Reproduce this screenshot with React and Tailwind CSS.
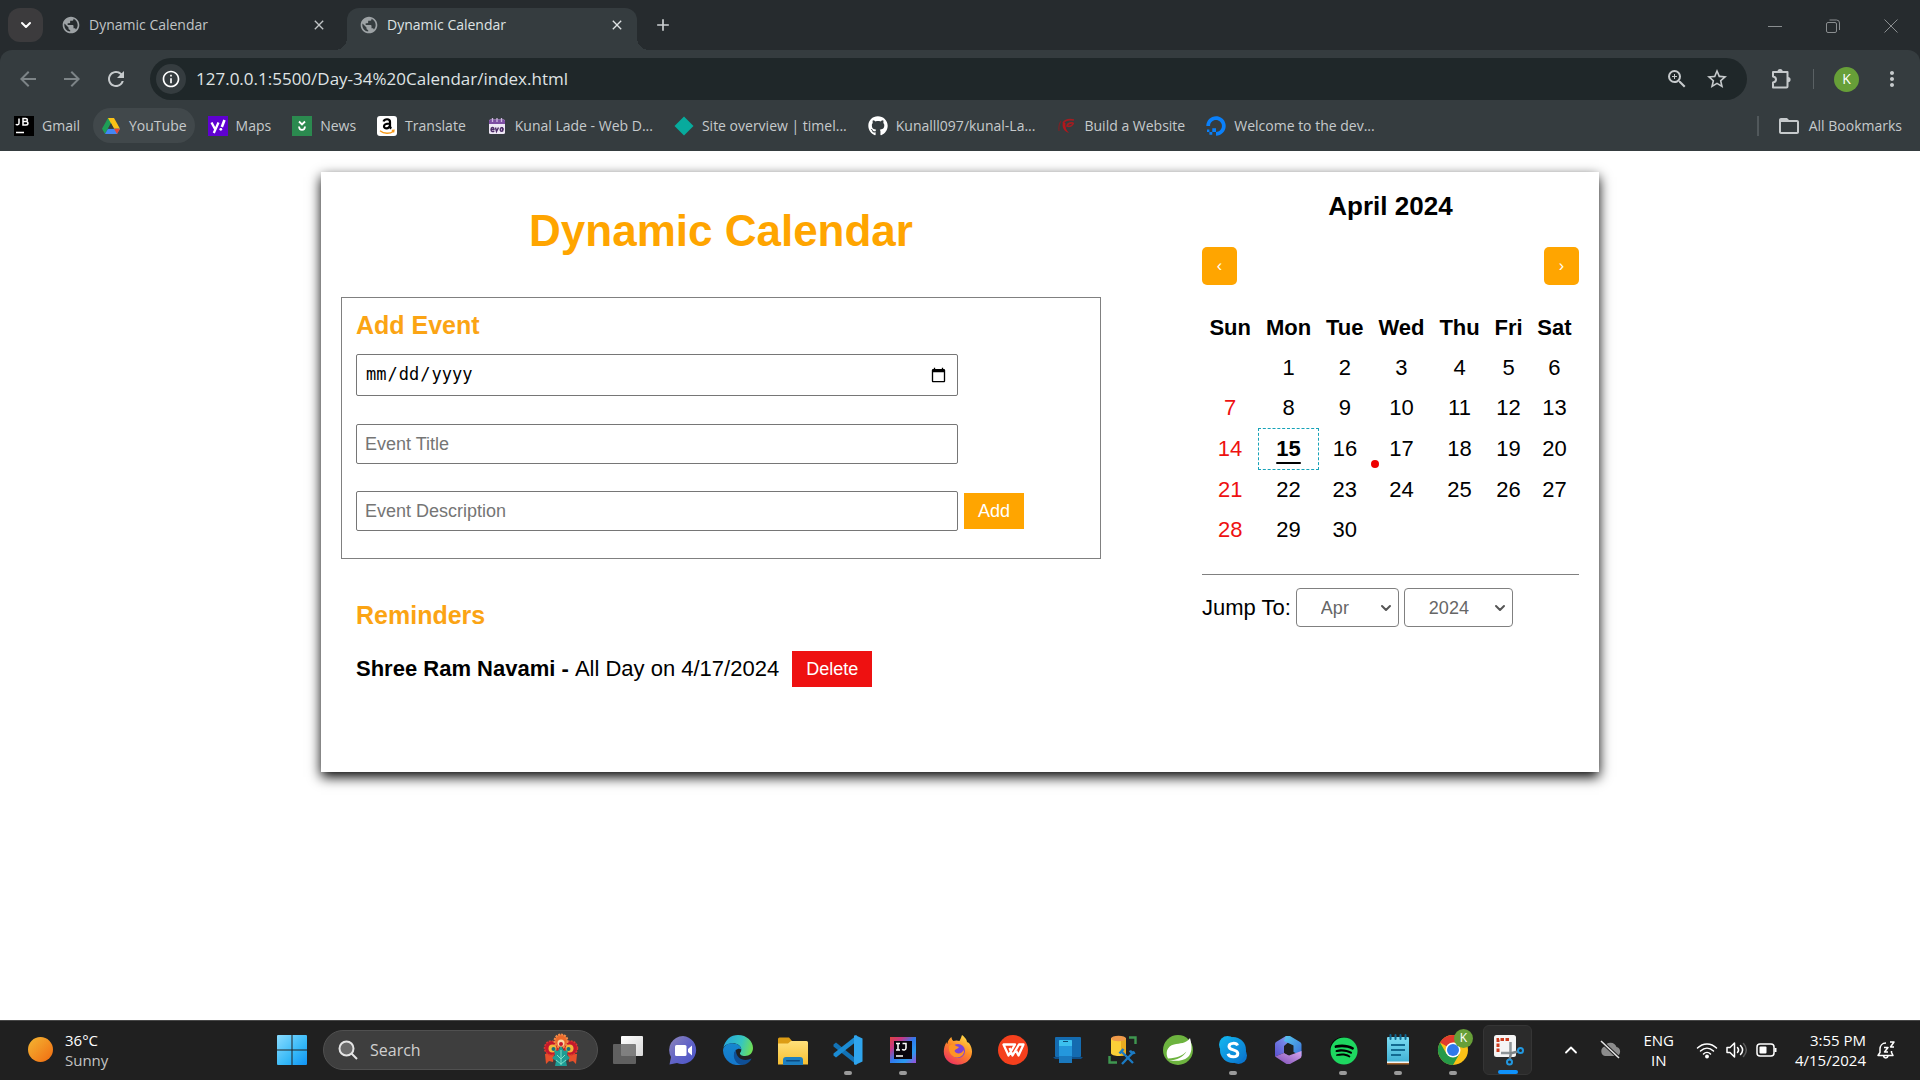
import React from "react";
import {
  MdArrowBack,
  MdArrowForward,
  MdRefresh,
  MdInfoOutline,
  MdZoomIn,
  MdStarBorder,
  MdMoreVert,
  MdFolderOpen,
  MdPublic,
  MdClose,
  MdAdd,
} from "react-icons/md";
import { FaGithub, FaDigitalOcean, FaSpotify } from "react-icons/fa";
import { ChevronUp, ChevronDown } from "lucide-react";

/* ---------- Browser chrome ---------- */

function Tab({ active, title }) {
  return (
    <div
      className={
        active
          ? "relative flex h-[42px] w-[290px] items-center rounded-t-xl bg-[#353c3f] px-3 pb-2 text-[#dfe3e4]"
          : "flex h-[42px] w-[298px] items-center pb-2 pr-5 pl-3 text-[#c0c4c6]"
      }
    >
      {active && (
        <>
          <span className="absolute bottom-0 -left-3 size-3 bg-[radial-gradient(circle_at_0_0,transparent_12px,#353c3f_12px)]" />
          <span className="absolute bottom-0 -right-3 size-3 bg-[radial-gradient(circle_at_100%_0,transparent_12px,#353c3f_12px)]" />
        </>
      )}
      <MdPublic className="size-5 text-[#9da2a5]" />
      <span className="ml-2 flex-1 text-sm leading-5">{title}</span>
      <button aria-label={"Close " + title} className="p-0">
        <MdClose className="size-4" />
      </button>
    </div>
  );
}

function TabStrip() {
  return (
    <div className="flex h-[50px] items-end bg-[#262b2e]">
      <button aria-label="Search tabs" className="mb-2 ml-2 grid h-[34px] w-[35px] place-items-center rounded-xl bg-[#3c3b3d] text-white">
        <ChevronDown className="size-4" strokeWidth={3} />
      </button>
      <div className="ml-[6px] flex">
        <Tab title="Dynamic Calendar" />
        <Tab title="Dynamic Calendar" active />
      </div>
      <button aria-label="New tab" className="mb-[15px] ml-4 text-[#cdd1d3]">
        <MdAdd className="size-5" />
      </button>
      <div className="mb-[17px] ml-auto flex items-center gap-11 pr-[22px] text-[#8a8e90]">
        <button aria-label="Minimize">
          <svg className="size-[14px]" viewBox="0 0 14 14" stroke="currentColor" fill="none"><path d="M0 7.5h14" /></svg>
        </button>
        <button aria-label="Restore">
          <svg className="size-[14px]" viewBox="0 0 14 14" stroke="currentColor" fill="none">
            <rect x="0.5" y="3.5" width="10" height="10" rx="1.5" />
            <path d="M3.5 1h7a3 3 0 0 1 3 3v7" />
          </svg>
        </button>
        <button aria-label="Close window">
          <svg className="size-[14px]" viewBox="0 0 14 14" stroke="currentColor" fill="none"><path d="M.5.5l13 13M13.5.5l-13 13" /></svg>
        </button>
      </div>
    </div>
  );
}

function Toolbar() {
  return (
    <div className="flex h-[58px] items-center text-[#c6cacc]">
      <div className="flex gap-5 pl-4">
        <button aria-label="Back" className="text-[#7d8487]"><MdArrowBack className="size-6" /></button>
        <button aria-label="Forward" className="text-[#7d8487]"><MdArrowForward className="size-6" /></button>
        <button aria-label="Reload"><MdRefresh className="size-6" /></button>
      </div>
      <div className="ml-[22px] flex h-[42px] flex-1 items-center rounded-full bg-[#1f2729] pr-[18px] pl-[6px]">
        <button aria-label="Site information" className="grid size-[30px] place-items-center rounded-full bg-[#353c3f]">
          <MdInfoOutline className="size-5 text-white" />
        </button>
        <input
          aria-label="Address"
          defaultValue="127.0.0.1:5500/Day-34%20Calendar/index.html"
          className="ml-[10px] flex-1 bg-transparent text-[17px] leading-6 text-[#dfe3e4] outline-none"
        />
        <button aria-label="Zoom"><MdZoomIn className="size-6" /></button>
        <button aria-label="Bookmark this tab" className="ml-4"><MdStarBorder className="size-6" /></button>
      </div>
      <button aria-label="Extensions" className="ml-[22px]">
        <svg viewBox="0 0 24 24" className="size-6" fill="none" stroke="currentColor" strokeWidth="2" strokeLinejoin="round">
          <path d="M4 5h14.500v14.500a1 1 0 0 1-1 1H4v-5c4-.5 4-5.500 0-6z" />
          <path d="M8.500 4.500a2.600 2.600 0 0 1 5.200 0zM19 10a2.600 2.600 0 0 1 0 5.200z" fill="currentColor" stroke="none" />
        </svg>
      </button>
      <span className="ml-5 h-5 w-px bg-[#5a6164]" />
      <button aria-label="Profile" className="ml-5 grid size-[25px] place-items-center rounded-full bg-[#679f38] text-sm text-white">K</button>
      <button aria-label="Menu" className="mr-4 ml-[21px]"><MdMoreVert className="size-6" /></button>
    </div>
  );
}

const JetBrains = () => (
  <svg viewBox="0 0 20 20" className="size-5">
    <rect width="20" height="20" fill="#000" />
    <path d="M2 8.2c.4.8 3 1 3-1V2.5M9 2.5h2.600c2.400 0 2.400 3 0 3H9zM9 5.500h3c2.600 0 2.600 3.500 0 3.500H9z" fill="none" stroke="#fff" strokeWidth="1.500" />
    <path d="M2 16.500h8" stroke="#fff" strokeWidth="1.500" />
  </svg>
);
const Drive = () => (
  <svg viewBox="0 0 20 20" className="size-5">
    <path d="M7 2h6l-3 5.300L4 18 1 12.700z" fill="#1e9e57" />
    <path d="M7 2h6l6 10.700h-6z" fill="#fbc116" />
    <path d="M4 18l3-5.300h12L16 18z" fill="#4286f5" />
    <path d="M19 12.700L16 18l-3-5.300z" fill="#e94435" />
    <path d="M10 7.300l-3 5.400h6z" fill="#353c3f" />
  </svg>
);
const Yahoo = () => (
  <svg viewBox="0 0 20 20" className="size-5">
    <rect width="20" height="20" fill="#5f01d1" />
    <path d="M3.500 6.500l3.500 6.500M10.500 6.500L5.800 17" stroke="#fff" strokeWidth="2.300" fill="none" />
    <path d="M16.500 4l-2.700 7" stroke="#fff" strokeWidth="2.600" />
    <circle cx="12.800" cy="13.300" r="1.400" fill="#fff" />
  </svg>
);
const Chevrons = () => (
  <svg viewBox="0 0 20 20" className="size-5">
    <rect width="20" height="20" fill="#2b8a4f" />
    <path d="M7 5.500l3 3 3-3M7 10.500c.3 4.500 5.700 4.500 6 0" stroke="#fff" strokeWidth="1.800" fill="none" />
  </svg>
);
const Amazon = () => (
  <svg viewBox="0 0 20 20" className="size-5">
    <rect width="20" height="20" rx="3" fill="#fff" />
    <path d="M6.500 5.500C7.500 2.500 13 2.400 13 5.800V10c0 1.300.4 1.800 1.200 2.600M12.800 7.500C9 7.500 7 8.400 7 10.500c0 2.500 4.800 2.600 5.800-.6" fill="none" stroke="#000" strokeWidth="2.200" />
    <path d="M3 14.800c4 3.200 10 3.200 13.500.4M14.800 14.500l2.200-.2-.4 2.200" fill="none" stroke="#f79a1b" strokeWidth="1.300" />
  </svg>
);
const Events = () => (
  <svg viewBox="0 0 20 20" className="size-5">
    <rect x="2" y="3.500" width="16" height="14.500" rx="1.500" fill="#eee7f5" />
    <path d="M2 8V5a1.500 1.500 0 0 1 1.500-1.500h13A1.500 1.500 0 0 1 18 5v3z" fill="#7d4da3" />
    <path d="M5.500 2v4M10 2v4M14.500 2v4" stroke="#cdb5e0" strokeWidth="1.300" />
    <path d="M4 13.500h3c0-3-3-2.500-3 0s2 2.500 3.200 1.400M8.500 11.500l1 4 2-4M15.500 11.800c-2.500-1-3 3.500-1 3.500s2-3 1-3.500v4" fill="none" stroke="#4b2a66" strokeWidth="1.400" />
  </svg>
);
const Diamond = () => (
  <svg viewBox="0 0 20 20" className="size-5"><path d="M10 .5l9.500 9.500L10 19.500.5 10z" fill="#07ab9d" /></svg>
);
const RedMark = () => (
  <svg viewBox="0 0 20 20" className="size-5">
    <path d="M18 4c-5-1-9 0-11 3M17.500 7c-4-.5-6 1-6.500 3 2.500 1 5.500 0 6.500-3" fill="none" stroke="#a31d21" strokeWidth="1.600" />
    <path d="M7 6c-1.500 5 1 9.500 6 11-3-3-4-6-3.500-10z" fill="#b5161b" />
    <path d="M5 5c-2 3-2.500 6-2 10" fill="none" stroke="#7d2226" strokeWidth="1.200" />
  </svg>
);

const bookmarks = [
  { name: "Gmail", icon: <JetBrains /> },
  { name: "YouTube", icon: <Drive />, hover: true },
  { name: "Maps", icon: <Yahoo /> },
  { name: "News", icon: <Chevrons /> },
  { name: "Translate", icon: <Amazon /> },
  { name: "Kunal Lade - Web D...", icon: <Events /> },
  { name: "Site overview | timel...", icon: <Diamond /> },
  { name: "Kunalll097/kunal-La...", icon: <FaGithub className="size-5 text-white" /> },
  { name: "Build a Website", icon: <RedMark /> },
  { name: "Welcome to the dev...", icon: <FaDigitalOcean className="size-5 text-[#0a80fa]" /> },
];

function Bookmarks() {
  return (
    <nav aria-label="Bookmarks" className="flex h-[43px] items-start px-[6px] text-sm text-[#c6cacc]">
      <div className="flex gap-[5px]">
        {bookmarks.map((b) => (
          <a
            key={b.name}
            href="#"
            className={
              b.hover
                ? "flex h-[35px] items-center gap-2 rounded-full bg-[#41484b] px-2 whitespace-nowrap"
                : "flex h-[35px] items-center gap-2 rounded-full px-2 whitespace-nowrap"
            }
          >
            {b.icon}
            {b.name}
          </a>
        ))}
      </div>
      <span className="mt-2 ml-auto h-5 w-[2px] bg-[#51585b]" />
      <a href="#" className="ml-[18px] flex h-[35px] items-center gap-2 pr-3 whitespace-nowrap">
        <MdFolderOpen className="size-6" />
        All Bookmarks
      </a>
    </nav>
  );
}

/* ---------- Calendar page ---------- */

const days = ["Sun", "Mon", "Tue", "Wed", "Thu", "Fri", "Sat"];
const weeks = [
  [null, 1, 2, 3, 4, 5, 6],
  [7, 8, 9, 10, 11, 12, 13],
  [14, 15, 16, 17, 18, 19, 20],
  [21, 22, 23, 24, 25, 26, 27],
  [28, 29, 30, null, null, null, null],
];

function Day({ value, column }) {
  if (value === 15) {
    return (
      <td className="border border-dashed border-[#17a2b8] px-[7px] py-2 font-bold underline decoration-2 underline-offset-[6px]">
        15
      </td>
    );
  }
  return (
    <td className={column === 0 ? "px-[7px] py-2 text-[#ee1111]" : "relative px-[7px] py-2"}>
      {value}
      {value === 17 && <span className="absolute bottom-[2px] left-0 size-2 rounded-full bg-[#ee0000]" />}
    </td>
  );
}

function Select({ id, label, value, className }) {
  return (
    <div className="relative">
      <select
        id={id}
        aria-label={label}
        defaultValue={value}
        className={"h-[39px] appearance-none rounded border border-[#808080] bg-white pl-6 text-[18px] text-[#666] " + className}
      >
        <option>{value}</option>
      </select>
      <ChevronDown className="pointer-events-none absolute top-3 right-[5px] size-4 text-[#555]" strokeWidth={3} />
    </div>
  );
}

function Calendar() {
  return (
    <section className="w-[377px] leading-6">
      <h3 className="text-center text-[26px] leading-7 font-bold">April 2024</h3>
      <div className="mt-[27px] flex justify-between text-base text-white">
        <button aria-label="Previous month" className="h-[38px] w-[35px] rounded-[5px] bg-[#ffa500]">‹</button>
        <button aria-label="Next month" className="h-[38px] w-[35px] rounded-[5px] bg-[#ffa500]">›</button>
      </div>
      <table className="mt-[23px] w-full border-collapse text-center">
        <thead>
          <tr>
            {days.map((d) => (
              <th key={d} className="px-[7px] py-2 font-bold">{d}</th>
            ))}
          </tr>
        </thead>
        <tbody>
          {weeks.map((w, i) => (
            <tr key={i}>
              {w.map((v, c) => (
                <Day key={c} value={v} column={c} />
              ))}
            </tr>
          ))}
        </tbody>
      </table>
      <div className="mt-6 flex items-center gap-[5px] border-t border-[#808080] pt-[13px]">
        <label htmlFor="month">Jump To:</label>
        <Select id="month" value="Apr" label="Jump to month" className="w-[103px]" />
        <Select value="2024" label="Jump to year" className="w-[109px]" />
      </div>
    </section>
  );
}

function EventForm() {
  return (
    <form className="mt-[41px] border border-[#808080] px-[14px] pt-[13px] pb-[27px]">
      <h3 className="text-[25px] leading-7 font-bold text-[#fba414]">Add Event</h3>
      <input
        type="date"
        aria-label="Event date"
        className="mt-[15px] block h-[42px] w-[602px] rounded-[2px] border border-[#767676] px-2 font-['DejaVu_Sans_Mono',monospace] text-[17px]"
      />
      <input
        aria-label="Event title"
        placeholder="Event Title"
        className="mt-7 block h-10 w-[602px] rounded-[2px] border border-[#767676] px-2 text-[18px] placeholder:text-[#757575]"
      />
      <div className="mt-[27px] flex items-center gap-[6px]">
        <input
          aria-label="Event description"
          placeholder="Event Description"
          className="h-10 w-[602px] rounded-[2px] border border-[#767676] px-2 text-[18px] placeholder:text-[#757575]"
        />
        <button type="button" className="h-9 bg-[#ffa500] px-[14px] text-[18px] text-white">Add</button>
      </div>
    </form>
  );
}

function CalendarPage() {
  return (
    <main className="flex-1 bg-white pt-[21px] font-['Liberation_Sans',Arial,sans-serif] text-[22px] text-black">
      <div className="mx-auto flex min-h-[600px] w-[1278px] max-w-full items-start justify-between bg-white p-5 shadow-[0_5px_12px_#000]">
        <div className="w-[760px]">
          <h1 className="mt-[14px] text-center text-[44px] leading-[50px] font-bold text-[#ffa500]">Dynamic Calendar</h1>
          <EventForm />
          <section className="mt-[42px] px-[15px]">
            <h3 className="text-[25px] leading-7 font-bold text-[#fba414]">Reminders</h3>
            <div className="mt-[22px] flex items-center">
              <p className="leading-6"><strong>Shree Ram Navami - </strong>All Day on 4/17/2024</p>
              <button className="ml-[13px] h-9 bg-[#ee1111] px-[14px] text-[18px] text-white">Delete</button>
            </div>
          </section>
        </div>
        <Calendar />
      </div>
    </main>
  );
}

/* ---------- Taskbar ---------- */

const Svg = ({ children, label }) => (
  <svg viewBox="0 0 32 32" className="size-8" role="img" aria-label={label}>{children}</svg>
);

const apps = [
  {
    name: "Task view",
    icon: (
      <>
        <defs><linearGradient id="tv" x1="0" y1="0" x2="1" y2="1"><stop stopColor="#fff" /><stop offset="1" stopColor="#d8d8d8" /></linearGradient></defs>
        <rect x="9" y="2" width="22" height="20" rx="1" fill="url(#tv)" />
        <rect x="1" y="10" width="23" height="20" rx="1" fill="#6c6c6c" opacity=".85" />
      </>
    ),
  },
  {
    name: "Chat",
    icon: (
      <>
        <defs><linearGradient id="ch" x1="0" y1="0" x2="1" y2="1"><stop stopColor="#8f86b8" /><stop offset=".5" stopColor="#6264c7" /><stop offset="1" stopColor="#4a55c8" /></linearGradient></defs>
        <path d="M16 2a14 14 0 1 1-6 27l-7.500 1.500L4 23A14 14 0 0 1 16 2z" fill="url(#ch)" />
        <rect x="8" y="11" width="11.500" height="11" rx="1.500" fill="#fff" />
        <path d="M21 15l4-3.500v10L21 18z" fill="#fff" />
      </>
    ),
  },
  {
    name: "Edge",
    icon: (
      <>
        <defs>
          <linearGradient id="eg" x1="0" y1=".3" x2="1" y2=".5"><stop stopColor="#26a6dc" /><stop offset=".6" stopColor="#36c6c0" /><stop offset="1" stopColor="#6fdf55" /></linearGradient>
          <linearGradient id="eb" x1="0" y1="0" x2="0" y2="1"><stop stopColor="#1687cf" /><stop offset="1" stopColor="#1477cc" /></linearGradient>
        </defs>
        <path d="M1.300 14C3 5.500 9 1 16 1c9 0 15 6.500 15 13 0 5-3.500 8-8 8-3.500 0-5.500-1.500-5-3 .8-1 1.300-2 1.300-3.500 0-3.500-4-6.200-8.500-6.200-5 0-8.500 2.200-9.500 4.700z" fill="url(#eg)" />
        <path d="M1 16.500C1 12 5.500 9.300 10.500 9.300c5 0 8.800 3 8.800 6.200-3-2-6.800.5-6.800 4.500 0 5 4.500 8.500 8.500 10.200A15 15 0 0 1 1 16.500z" fill="url(#eb)" />
        <path d="M14 15.500c-4.500 5.500-1.500 13.500 4.500 15.300 5 .7 9.500-2.500 11-6.300-7 3.500-16 .5-15.500-9z" fill="#0f4f96" />
      </>
    ),
  },
  {
    name: "File Explorer",
    icon: (
      <>
        <defs><linearGradient id="fe" x1="0" y1="0" x2="0" y2="1"><stop stopColor="#ffe07a" /><stop offset="1" stopColor="#f7bf32" /></linearGradient></defs>
        <path d="M1 5a1.500 1.500 0 0 1 1.500-1.500H12L15 7v6H1z" fill="#dc9c14" />
        <path d="M1 9.500h10l3-2.500h15.500A1.500 1.500 0 0 1 31 8.500v22H1z" fill="url(#fe)" />
        <path d="M6 31v-5a3 3 0 0 1 3-3h14a3 3 0 0 1 3 3v5z" fill="#1d7fc0" />
        <rect x="9" y="26" width="14" height="1.500" rx=".7" fill="#0c4a80" />
      </>
    ),
  },
  {
    name: "Visual Studio Code",
    running: true,
    icon: (
      <>
        <path d="M1.500 10.500L4 8.500l21 17V31L1.500 12.500z" fill="#1272b5" />
        <path d="M1.500 21.500L4 23.500 25 7V1L1.500 19.500z" fill="#1b8bd3" />
        <path d="M23 1l7.500 3.500v23L23 31l-1-1V2z" fill="#2fa5ee" />
      </>
    ),
  },
  {
    name: "IntelliJ IDEA",
    running: true,
    icon: (
      <>
        <defs><linearGradient id="ij" x1="0" y1="0" x2="1" y2="1"><stop stopColor="#e0443e" /><stop offset=".25" stopColor="#c73684" /><stop offset=".5" stopColor="#2f7bf0" /><stop offset=".75" stopColor="#2a9bef" /><stop offset="1" stopColor="#a04bd8" /></linearGradient></defs>
        <rect x="3" y="3" width="26" height="26" fill="url(#ij)" />
        <rect x="7" y="7" width="18" height="18" fill="#08050d" />
        <path d="M9 9.500h4M11 9.500V16M9 16h4M15.500 9.500h3.500V14c0 2.500-3 2.500-3.700 1.200M9 22h7" stroke="#fff" strokeWidth="1.500" fill="none" />
      </>
    ),
  },
  {
    name: "Firefox",
    icon: (
      <>
        <defs><linearGradient id="ff" x1=".8" y1="0" x2=".2" y2="1"><stop stopColor="#ffe04a" /><stop offset=".45" stopColor="#ff8a26" /><stop offset="1" stopColor="#ec2d62" /></linearGradient></defs>
        <path d="M20 1c4 3 5 5.500 5 7l2 1c3 4 4 9 2 14-4 8-15 10-22 5C0 23 1 14 4.500 8c0 1 .3 1.600.8 2C6 6 8 4 9.500 3c0 1.500.6 3 2 4 2-.8 4-.8 6 0 1-2 2-4 2.500-6z" fill="url(#ff)" />
        <circle cx="16" cy="17" r="7" fill="#7d43d6" />
        <path d="M7 12c2-2 5-2 7 0l3 1c-1 2-4 2-4.500 4 1.500 3 6 4 9.500-1 .8 7-8 10-12.500 5C7 18.500 6.500 15 7 12z" fill="#ff9423" />
      </>
    ),
  },
  {
    name: "WPS Office",
    icon: (
      <>
        <circle cx="16" cy="16" r="15" fill="#f5401d" />
        <path d="M6.500 10.500H18L11.500 21.500zM12.500 14l3 7.500 6.500-11h4.500L21.500 21.500l-3-6" fill="none" stroke="#fff" strokeWidth="2.300" strokeLinejoin="round" />
      </>
    ),
  },
  {
    name: "Phone Link",
    icon: (
      <>
        <rect x="3" y="3" width="26" height="20" rx="1" fill="#146bb0" />
        <path d="M1 23h30l-2 2H3z" fill="#0f4f88" />
        <rect x="7" y="6" width="13" height="23" rx="1" fill="#2497dc" />
        <path d="M7 7a1 1 0 0 1 1-1h11a1 1 0 0 1 1 1v5H7z" fill="#3cc0ef" />
        <path d="M7 22h13v7H7z" fill="#1a78bd" />
        <path d="M11 7.500h5" stroke="#0b4c78" />
      </>
    ),
  },
  {
    name: "Database tools",
    icon: (
      <>
        <path d="M4 4v15c0 4 15 4 15 0V4z" fill="#fbd038" />
        <path d="M14 4v18c3 0 5-1 5-3V4z" fill="#e9ad20" />
        <ellipse cx="11.500" cy="4.500" rx="7.500" ry="2.800" fill="#ef9a4a" />
        <path d="M22 3.500h6.500V10M2.500 22v6.500H10" fill="none" stroke="#3f9750" strokeWidth="2.400" />
        <path d="M14 17l12 12M27 17.500L15 30" stroke="#1b7bc4" strokeWidth="2.300" />
        <path d="M12.500 19.500l4-4.500M23 16.500c1 2 3 3.200 5 2" stroke="#1b7bc4" strokeWidth="2.600" fill="none" />
      </>
    ),
  },
  {
    name: "Spring",
    icon: (
      <>
        <circle cx="16" cy="16" r="15" fill="#6db33f" />
        <path d="M28 4c2.500 9 2 15-2 19-5 4.500-12 4-19 3.500 8-.5 14-3 17.500-9C20 22 15 24 6 24.500 3 19 5 12 12 10.500 18 9 24 10 28 4z" fill="#fff" />
      </>
    ),
  },
  {
    name: "Skype",
    running: true,
    icon: (
      <>
        <defs><linearGradient id="sk" x1="0" y1="0" x2="1" y2="1"><stop stopColor="#12b6f0" /><stop offset="1" stopColor="#0a72cc" /></linearGradient></defs>
        <circle cx="10.500" cy="10.500" r="8.500" fill="#12aeea" />
        <circle cx="21.500" cy="21.500" r="8.500" fill="#0b77cf" />
        <circle cx="16" cy="16" r="13" fill="url(#sk)" />
        <path d="M20.500 11.500c-1-3-8.500-3-8.500 1 0 4.500 8.800 2.300 8.800 7 0 4.300-8.500 4.300-9.800.3" fill="none" stroke="#fff" strokeWidth="3" />
      </>
    ),
  },
  {
    name: "Microsoft 365",
    icon: (
      <>
        <defs>
          <linearGradient id="ma" x1="0" y1="1" x2="1" y2="0"><stop stopColor="#5a4fcf" /><stop offset="1" stopColor="#86a9f5" /></linearGradient>
          <linearGradient id="mb" x1="0" y1="0" x2="1" y2="1"><stop stopColor="#57c8ee" /><stop offset="1" stopColor="#3b6fd8" /></linearGradient>
          <linearGradient id="mc" x1="0" y1="1" x2="1" y2="0"><stop stopColor="#7a4bb5" /><stop offset="1" stopColor="#d9a8ee" /></linearGradient>
        </defs>
        <path d="M14 2L4 8a3 3 0 0 0-1 2.500v12l9-3.500v-7l8-7z" fill="url(#ma)" />
        <path d="M14 2h4l10 6a3 3 0 0 1 1.500 2.500V22l-8-4v-6.500L12 7z" fill="url(#mb)" />
        <path d="M29.500 17v5a3 3 0 0 1-1.500 2.500L18 30h-3.500L3 22.500l9-3.500 5 2.500z" fill="url(#mc)" />
        <path d="M12 12.500l4.500-2.500 4.500 2.500V18l-4.500 3L12 18.500z" fill="#202020" />
      </>
    ),
  },
  { name: "Spotify", running: true, node: <span className="grid size-[26px] place-items-center rounded-full bg-black"><FaSpotify className="size-7 shrink-0 text-[#1ed760]" /></span> },
  {
    name: "Notepad",
    running: true,
    icon: (
      <>
        <defs><linearGradient id="np" x1="0" y1="0" x2="0" y2="1"><stop stopColor="#7bdcf2" /><stop offset="1" stopColor="#3fb0d4" /></linearGradient></defs>
        <rect x="5" y="3" width="22" height="26" rx="1" fill="url(#np)" />
        <path d="M5 28h22v2.500H5z" fill="#a5642c" />
        <path d="M5 27.500h22V29H5z" fill="#f3f3f3" />
        <path d="M8.500 1v4M13.500 1v4M18.500 1v4M23.500 1v4" stroke="#0e6791" strokeWidth="2" strokeLinecap="round" />
        <path d="M9 11h14M9 16h14M9 21h10" stroke="#136a91" strokeWidth="1.800" />
      </>
    ),
  },
  {
    name: "Chrome",
    running: true,
    badge: true,
    icon: (
      <>
        <circle cx="16" cy="16" r="15" fill="#fbc116" />
        <path d="M16 16L3 8.500A15 15 0 0 1 29 8.500H16z" fill="#e33b2e" />
        <path d="M9.500 19.700L3 8.500A15 15 0 0 0 16 31l6.500-11.300z" fill="#269a48" />
        <circle cx="16" cy="16" r="7.500" fill="#fff" />
        <circle cx="16" cy="16" r="6" fill="#3079ea" />
      </>
    ),
  },
  {
    name: "Snipping Tool",
    active: true,
    icon: (
      <>
        <rect x="2" y="1" width="22" height="22" rx="2.500" fill="#f5f5f5" />
        <path d="M6 18V5.500h12.500" fill="none" stroke="#cc3a1c" strokeWidth="3" strokeDasharray="3.500 1.500" />
        <path d="M18.500 8v11.500M9 19h10" stroke="#8f9598" strokeWidth="2.500" />
        <path d="M18 19.500l8-2M19 19l-1.500 7" stroke="#7d8386" strokeWidth="2.500" />
        <circle cx="28.500" cy="16.500" r="2.500" fill="none" stroke="#2298e0" strokeWidth="2" />
        <circle cx="17.500" cy="28" r="2.500" fill="none" stroke="#2298e0" strokeWidth="2" />
      </>
    ),
  },
];

function AppButton({ app }) {
  return (
    <button
      aria-label={app.name}
      className={
        app.active
          ? "relative mx-[3px] grid h-[50px] w-[49px] place-items-center rounded-md border border-[#353535] bg-[#2b2b2b]"
          : "relative grid h-[50px] w-[55px] place-items-center"
      }
    >
      {app.node || <Svg label={app.name}>{app.icon}</Svg>}
      {app.badge && (
        <span className="absolute top-1 right-[7px] grid size-[19px] place-items-center rounded-full bg-[#679f38] text-xs text-white">K</span>
      )}
      {app.running && <span className="absolute bottom-0 left-6 h-1 w-2 rounded-full bg-[#9a9a9a]" />}
      {app.active && <span className="absolute bottom-0 left-[14px] h-1 w-5 rounded-full bg-[#0f92fb]" />}
    </button>
  );
}

function SearchArt() {
  return (
    <svg viewBox="0 0 36 34" className="h-[34px] w-9" aria-hidden="true">
      <path d="M2 21h9l-1 8-4-1-3 3zM34 21h-9l1 8 4-1 3 3z" fill="#e5502b" />
      <circle cx="8.500" cy="15" r="7" fill="#c5172c" stroke="#d93a2c" strokeWidth="1.500" strokeDasharray="2 1" />
      <circle cx="27.500" cy="15" r="7" fill="#c5172c" stroke="#d93a2c" strokeWidth="1.500" strokeDasharray="2 1" />
      <circle cx="9.500" cy="15.500" r="4" fill="#f3b73b" />
      <circle cx="26.500" cy="15.500" r="4" fill="#f3b73b" />
      <circle cx="10.500" cy="16" r="2" fill="#19707a" />
      <circle cx="25.500" cy="16" r="2" fill="#19707a" />
      <circle cx="18" cy="8" r="6.500" fill="#ec6a2b" strokeDasharray="2 1" stroke="#f08a48" strokeWidth="2" />
      <circle cx="18" cy="10" r="3.500" fill="#fbd6a0" />
      <circle cx="18" cy="11" r="2" fill="#c5172c" />
      <path d="M18 13l3 5 4-1-1 5 3 3-4 3 1 5H12l1-5-4-3 3-3-1-5 4 1z" fill="#1e9c94" />
      <path d="M18 17v15M14 22l4 4 4-4M13 27l5 4 5-4" stroke="#7adfc8" strokeWidth="1" fill="none" />
    </svg>
  );
}

function Taskbar() {
  return (
    <footer className="flex h-[60px] items-center border-t border-[#474747] bg-[#202020] pb-[2px] text-[15px] leading-5 text-white">
      <div className="flex w-[260px] items-center gap-3 pl-7">
        <span className="size-[25px] rounded-full bg-linear-to-br from-[#f2b632] to-[#f0690f]" />
        <div>
          <p>36°C</p>
          <p className="text-[#c4c4c4]">Sunny</p>
        </div>
      </div>
      <button aria-label="Start" className="grid h-[50px] w-[63px] place-items-center">
        <svg viewBox="0 0 30 30" className="size-[30px]">
          <defs><linearGradient id="win" x1="0" y1="0" x2="30" y2="30" gradientUnits="userSpaceOnUse"><stop stopColor="#8adcff" /><stop offset=".6" stopColor="#35b8f7" /><stop offset="1" stopColor="#1093f5" /></linearGradient></defs>
          <path d="M1 0h13.500v14.500H0V1a1 1 0 0 1 1-1zM15.500 0H29a1 1 0 0 1 1 1v13.500H15.500zM0 15.500h14.500V30H1a1 1 0 0 1-1-1zM15.500 15.500H30V29a1 1 0 0 1-1 1H15.500z" fill="url(#win)" />
        </svg>
      </button>
      <label className="flex h-10 w-[275px] items-center rounded-full border border-[#505050] bg-[#3e3e3e] pr-[18px] pl-[14px]">
        <svg viewBox="0 0 20 20" className="size-5" fill="#6a6a6a" stroke="#e4e4e4" strokeWidth="2"><circle cx="8.500" cy="8.500" r="7" /><path d="M13.500 13.500l5.500 5.500" /></svg>
        <input placeholder="Search" aria-label="Search" className="ml-3 w-0 flex-1 bg-transparent text-base outline-none placeholder:text-[#cfcfcf]" />
        <SearchArt />
      </label>
      <div className="ml-[2px] flex">
        {apps.map((a) => (
          <AppButton key={a.name} app={a} />
        ))}
      </div>
      <div className="ml-auto flex items-center pr-6">
        <button aria-label="Show hidden icons"><ChevronUp className="size-5" strokeWidth={2.2} /></button>
        <svg viewBox="0 0 24 20" className="ml-[18px] h-5 w-6">
          <path d="M6 16a5 5 0 0 1-.5-9.500A6.500 6.500 0 0 1 17.500 7 4.700 4.700 0 0 1 18 16z" fill="#8c8c8c" />
          <path d="M2 1l18 17" stroke="#202020" strokeWidth="3.500" />
          <path d="M2 1l18 17" stroke="#e8e8e8" strokeWidth="1.500" />
        </svg>
        <div className="ml-5 text-center">
          <p>ENG</p>
          <p>IN</p>
        </div>
        <svg viewBox="0 0 22 18" className="ml-[22px] h-[18px] w-[22px]" fill="none" stroke="#fff" strokeWidth="1.500" strokeLinecap="round">
          <path d="M1.500 7c5.500-5.500 13.500-5.500 19 0M4.500 10c4-3.800 9-3.800 13 0M7.500 13c2-2 5-2 7 0" />
          <circle cx="11" cy="15.500" r="1.200" fill="#fff" />
        </svg>
        <svg viewBox="0 0 22 18" className="ml-2 h-[18px] w-[22px]" fill="none" stroke="#fff" strokeWidth="1.500" strokeLinejoin="round" strokeLinecap="round">
          <path d="M1 6.500h3L8.500 2v14L4 11.500H1zM11.500 6.500c1.300 1.500 1.300 3.500 0 5M14.500 4.500c2.500 2.700 2.500 6.300 0 9" />
          <path d="M17.500 2.500c3.500 4 3.500 9 0 13" stroke="#5c5c5c" />
        </svg>
        <svg viewBox="0 0 22 14" className="ml-2 h-[14px] w-[22px]" fill="none" stroke="#fff" strokeWidth="1.500">
          <rect x="1" y="1" width="17" height="12" rx="3" />
          <path d="M19.500 5v4" strokeWidth="2" />
          <rect x="3.500" y="3.500" width="7" height="7" rx="1" fill="#fff" stroke="none" />
        </svg>
        <div className="ml-[17px] text-right">
          <p>3:55 PM</p>
          <p>4/15/2024</p>
        </div>
        <svg viewBox="0 0 20 20" className="ml-[10px] size-5" fill="none" stroke="#fff" strokeWidth="1.500" strokeLinejoin="round">
          <path d="M10 3C6 3 4 6 4 9v3.500L2 15.500h15l-1.500-3V11M7.500 16c.5 2.500 4 2.500 4.500 0M8 7.500h4L8.500 12H12M14 2h4l-3.500 5H18" />
        </svg>
      </div>
    </footer>
  );
}

export default function App() {
  return (
    <div className="flex min-h-screen flex-col font-['Open_Sans','Noto_Sans',sans-serif]">
      <header className="bg-[#262b2e]">
        <TabStrip />
        <div className="rounded-t-xl bg-[#353c3f]">
          <Toolbar />
          <Bookmarks />
        </div>
      </header>
      <CalendarPage />
      <Taskbar />
    </div>
  );
}
